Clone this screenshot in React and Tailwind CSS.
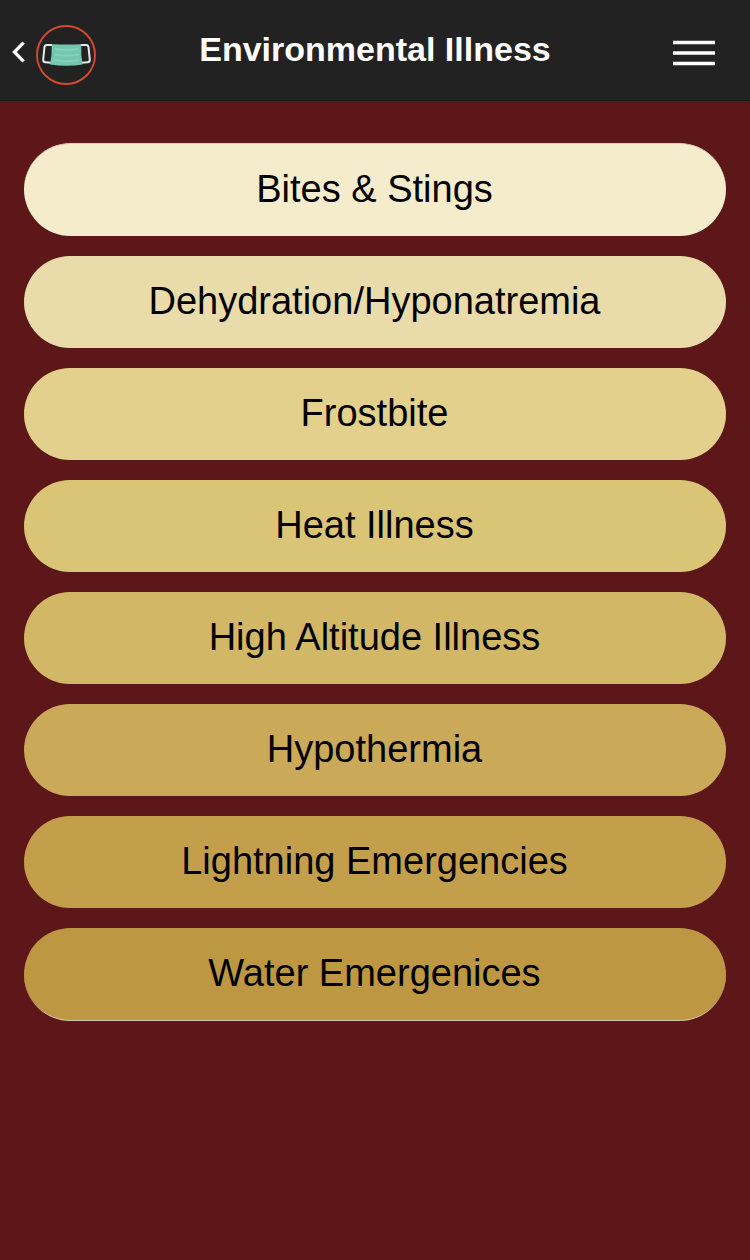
import React from 'react';

const topics = [
  { label: 'Bites & Stings', style: 'h-[93px] bg-[#f5eccb] border-t border-[#d9cdbc]' },
  { label: 'Dehydration/Hyponatremia', style: 'h-[92px] bg-[#eadcaa]' },
  { label: 'Frostbite', style: 'h-[92px] bg-[#e3d08c]' },
  { label: 'Heat Illness', style: 'h-[92px] bg-[#dac476]' },
  { label: 'High Altitude Illness', style: 'h-[92px] bg-[#d2b766]' },
  { label: 'Hypothermia', style: 'h-[92px] bg-[#caaa58]' },
  { label: 'Lightning Emergencies', style: 'h-[92px] bg-[#c39f4b]' },
  { label: 'Water Emergenices', style: 'h-[93px] bg-[#bd9741] border-b border-[#d3c5a8]' },
];

const MaskLogo = () => (
  <svg className="h-[60px] w-[60px]" viewBox="0 0 60 60" fill="none">
    <circle cx="30" cy="30" r="29" stroke="#d64b30" strokeWidth="1.9" />
    {/* ear loops */}
    <path d="M16 20 H11 Q8.8 20 8.5 22.2 L7.2 34.5 Q7 37 9.4 37.2 L15 37.8" stroke="#e9e9ec" strokeWidth="2" />
    <path d="M45 20 H50 Q52.2 20 52.5 22.2 L53.8 34.5 Q54 37 51.6 37.2 L46 37.8" stroke="#e9e9ec" strokeWidth="2" />
    {/* mask body */}
    <path d="M15.8 19.2 Q30.5 20 45.2 19.2 Q44.8 30 46.6 39.4 Q30.5 42.2 14.2 39.4 Q16 30 15.8 19.2Z" fill="#74c7ae" />
    <path d="M19.5 24 Q30.5 25.8 41.5 24 M19 29.7 Q30.5 31.6 42 29.7 M18.5 35.2 Q30.5 37.4 42.5 35.2" stroke="#86d3bc" strokeWidth="1.8" strokeLinecap="round" />
  </svg>
);

const App = () => {
  return (
    <div className="min-h-screen bg-[#5d1719] font-['Liberation_Sans',Arial,sans-serif]">
      <header className="grid h-[101px] grid-cols-[1fr_auto_1fr] items-center border-b border-[#1a1a1a] bg-[#222222]">
        <div className="flex items-center gap-[11px] pl-3 pt-[10px]">
          <svg className="mb-[6px] h-[22px] w-[13px] shrink-0" viewBox="0 0 13 22" fill="none">
            <path d="M11.6 1.6 L2.4 11 L11.6 20.4" stroke="#fff" strokeWidth="3.3" />
          </svg>
          <MaskLogo />
        </div>
        <h1 className="pb-[2px] text-[34px] leading-none font-bold text-white">Environmental Illness</h1>
        <div className="flex justify-end pr-[35px] pt-[6px]">
          <svg className="h-[26px] w-[42px]" viewBox="0 0 42 26" fill="none">
            <path d="M0 2.5 H42 M0 13 H42 M0 23.5 H42" stroke="#fff" strokeWidth="3.5" />
          </svg>
        </div>
      </header>

      <main className="flex flex-col gap-5 px-6 pt-[42px]">
        {topics.map(t => (
          <button key={t.label} className={`rounded-full pr-[1px] pb-[2px] text-[38px] text-black ${t.style}`}>
            {t.label}
          </button>
        ))}
      </main>
    </div>
  );
};

export default App;
